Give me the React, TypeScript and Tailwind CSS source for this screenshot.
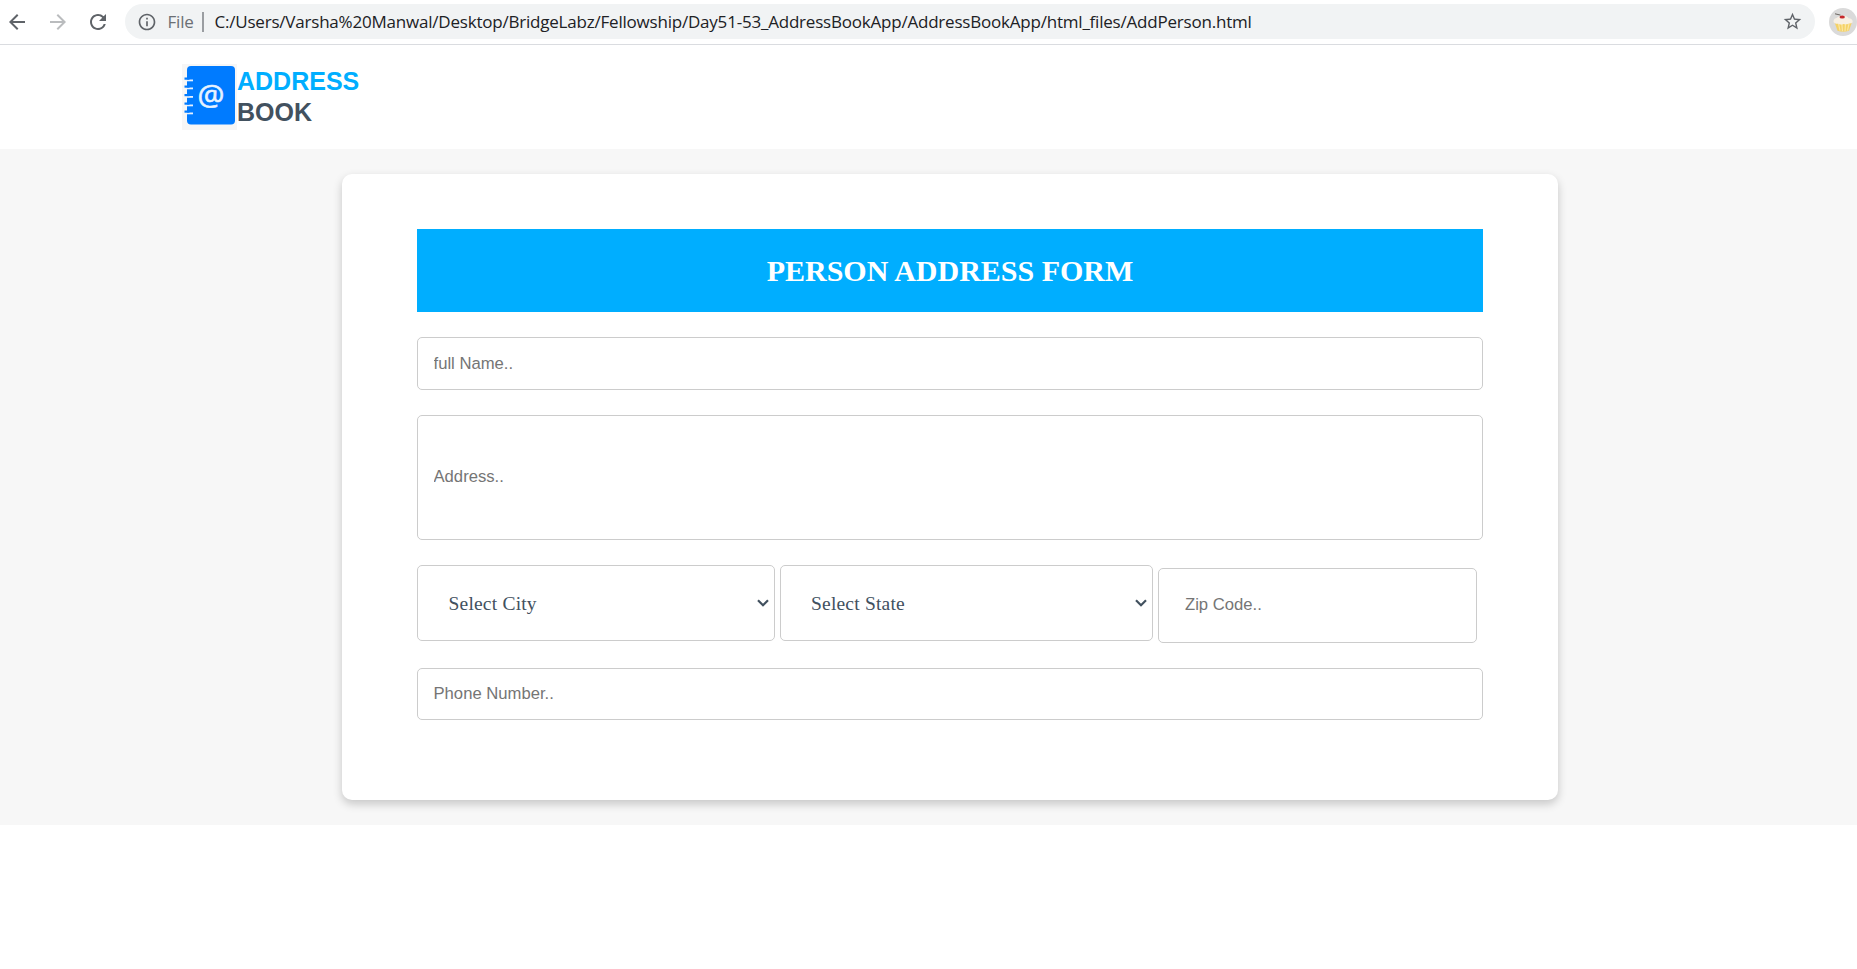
import React from "react";
import { MdArrowBack, MdArrowForward, MdRefresh, MdInfoOutline, MdStarBorder } from "react-icons/md";

const field =
  "block rounded-[5px] border border-[#cccccc] bg-white text-[16.670px] font-['Liberation_Sans',Arial,sans-serif] placeholder:text-[#757575] placeholder:opacity-100 outline-none";

function Cupcake() {
  return (
    <svg width="28" height="28" viewBox="0 0 28 28" className="shrink-0">
      <circle cx="14" cy="14" r="14" fill="#dadada" />
      <path d="M5.500 14h17.500l-3 8.800q-5.800 1.700-11.500 0z" fill="#f5d267" />
      <path d="M9.500 15.500l1.500 7.200M12.800 15.500l.7 7.700M16.500 15.500l-.5 7.700M20 15.500l-1.500 7.200" stroke="#fbe7a4" strokeWidth="1.200" />
      <path d="M4.500 13.500c0-2.500 2-3.400 3.200-3.500C8.800 8.400 11.500 7.800 14 7.800c3 0 4.900 1 5.500 2.400 2.600.2 4.400 1.600 4.200 3.500-.3 2-3.500 1.500-4.700 2.200-1.800.9-3 .2-4.600.1-2 .8-3.700.6-5.200-.2-2.200.1-4.700-.4-4.700-2.300z" fill="#f8f0e4" />
      <path d="M6 5.800l5.500 1.300" stroke="#6b6560" strokeWidth="1" />
      <ellipse cx="13.200" cy="9" rx="2.700" ry="1.600" fill="#c5282c" />
    </svg>
  );
}

function BrowserBar() {
  return (
    <div className="flex h-[45px] items-start border-b border-[#dadce0] bg-white pt-1 font-['Open_Sans','Noto_Sans',sans-serif]">
      <div className="flex h-[35px] w-[125px] shrink-0 items-center pl-[5px]">
        <MdArrowBack className="size-6 text-[#5f6368]" />
        <MdArrowForward className="ml-[17px] size-6 text-[#babcbe]" />
        <MdRefresh className="ml-4 size-6 text-[#5f6368]" />
      </div>
      <div className="flex h-[35px] w-[1690px] shrink-0 items-center rounded-full bg-[#f1f3f4] pl-3">
        <MdInfoOutline className="size-5 text-[#5f6368]" />
        <span className="ml-[10.500px] w-[34.500px] text-[17px] tracking-[-0.200px] whitespace-nowrap text-[#6b6f74]">File</span>
        <span className="h-5 w-[1.500px] bg-[#9a9da1]" />
        <span className="ml-[11px] text-[17px] tracking-[-0.209px] whitespace-nowrap text-[#202124]">
          C:/Users/Varsha%20Manwal/Desktop/BridgeLabz/Fellowship/Day51-53_AddressBookApp/AddressBookApp/html_files/AddPerson.html
        </span>
        <MdStarBorder className="mr-3 ml-auto size-[21px] text-[#5f6368]" />
      </div>
      <div className="flex h-[35px] items-center pl-3.5">
        <Cupcake />
      </div>
    </div>
  );
}

function LogoMark() {
  return (
    <svg width="55" height="66" viewBox="0 0 55 66" className="shrink-0">
      <rect width="55" height="66" fill="#f6f6f6" />
      <rect x="5" y="2" width="48" height="58.500" rx="4" fill="#007bff" />
      {[16, 24, 32.500, 41, 49].map((y) => (
        <g key={y}>
          <rect x="5" y={y - 0.500} width="6" height="1.800" fill="#e4f0ff" />
          <rect x="2.500" y={y - 2.500} width="5" height="2.200" fill="#007bff" />
        </g>
      ))}
      <text x="29" y="41.600" textAnchor="middle" fontSize="30" fill="#e8f3ff" stroke="#e8f3ff" strokeWidth="0.600" fontFamily="Open Sans, sans-serif">@</text>
    </svg>
  );
}

function Select({ label, className }: { label: string; className: string }) {
  return (
    <button
      type="button"
      className={`flex h-[76px] items-center justify-between rounded-[5px] border border-[#cccccc] bg-white pr-[5px] font-['Liberation_Serif',serif] text-[19.500px] tracking-[0.200px] text-[#42515f] ${className}`}
    >
      <span className="pt-px">{label}</span>
      <svg width="12" height="8" viewBox="0 0 12 8" fill="none" stroke="#42515f" strokeWidth="2.200">
        <path d="M1 1.200l5 5 5-5" />
      </svg>
    </button>
  );
}

export default function App() {
  return (
    <div className="h-[969px] w-[1857px] overflow-hidden bg-white">
      <BrowserBar />
      <header className="flex h-[104px] pt-[19px] pl-[182px]">
        <LogoMark />
        <div className="pt-[2px] font-['Liberation_Sans',Arial,sans-serif] text-[25px] leading-[31px] font-bold">
          <div className="text-[#00aeff]">ADDRESS</div>
          <div className="text-[#42515f]">BOOK</div>
        </div>
      </header>
      <main className="h-[676px] bg-[#f7f7f7] pt-[25px] pl-[342px]">
        <form className="h-[626px] w-[1216px] rounded-[10px] bg-white px-[75px] pt-[55px] shadow-[0_4px_10px_rgba(0,0,0,0.2)]">
          <h1 className="flex h-[83px] items-center justify-center bg-[#00aeff] font-['Liberation_Serif',serif] text-[30px] font-bold text-white">
            PERSON ADDRESS FORM
          </h1>
          <input placeholder="full Name.." className={`${field} mt-[25px] h-[53px] w-full px-[15.500px]`} />
          <input placeholder="Address.." className={`${field} mt-[25px] h-[125px] w-full px-[15.500px] pb-[2px]`} />
          <div className="mt-[25px] flex">
            <Select label="Select City" className="w-[358px] pl-[30.500px]" />
            <Select label="Select State" className="ml-[5px] w-[373px] pl-[30px]" />
            <input placeholder="Zip Code.." className={`${field} mt-[3px] ml-[5px] h-[75px] w-[319px] px-[26px] pb-[2px]`} />
          </div>
          <input placeholder="Phone Number.." className={`${field} mt-[25px] h-[52px] w-full px-[15.500px]`} />
        </form>
      </main>
    </div>
  );
}
